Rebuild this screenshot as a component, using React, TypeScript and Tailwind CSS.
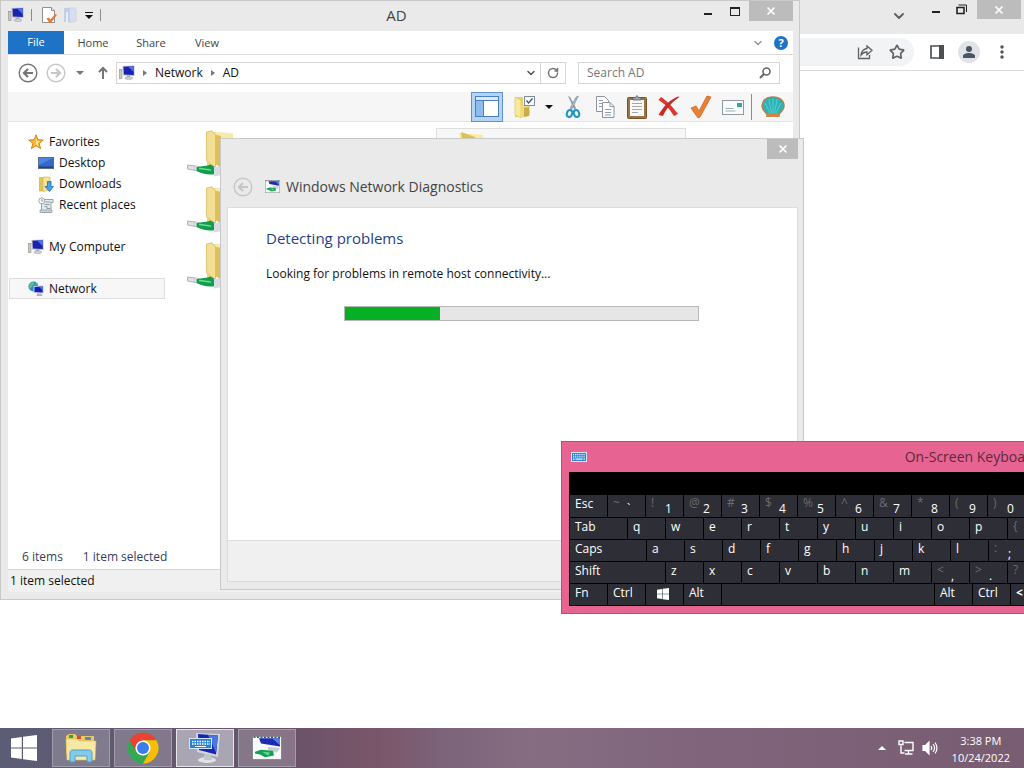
import type { ReactNode } from "react";
import { ChevronDown, RotateCw, Star } from "lucide-react";
import clsx from "clsx";

function MonitorIcon({ className = "h-4 w-4" }: { className?: string }) {
  return (
    <svg viewBox="0 0 16 16" className={className} aria-hidden="true">
      <rect x="0.5" y="4.5" width="2.5" height="9" fill="#c9c9c1" stroke="#8d8d86" strokeWidth="0.6" />
      <path d="M3.500 1 15.500.5v10.500L4 10.500z" fill="#b9bdc6" />
      <path d="M4.500 1.800 14.800 1.300v8.700L5 9.500z" fill="#1a22b0" />
      <path d="M9 1.600 14.800 1.300v6z" fill="#4f74e4" />
      <path d="M8 10.500h3l.5 2h-4z" fill="#a9acb3" />
      <ellipse cx="9.8" cy="13.200" rx="4" ry="1.4" fill="#cfd1d6" stroke="#9b9ea6" strokeWidth="0.5" />
    </svg>
  );
}

function PropertiesIcon() {
  return (
    <svg viewBox="0 0 16 16" className="h-4 w-4" aria-hidden="true">
      <path d="M1.5.5h9l3 3v12h-12z" fill="#fff" stroke="#8f8f8f" />
      <path d="M10.5.5v3h3" fill="#eee" stroke="#8f8f8f" />
      <path d="m5.500 11.500 2.500-1 1.500 2L14 7l2 .8L10 15.800 8.500 16z" fill="#e07c35" />
    </svg>
  );
}

function FadedFolderIcon() {
  return (
    <svg viewBox="0 0 16 16" className="h-4 w-4" aria-hidden="true">
      <path d="M2 1h6v14H2z" fill="#c3cfe3" />
      <path d="M7 1h5.500l1.500 1V14L8 15.500z" fill="#d5dff0" stroke="#bccae2" strokeWidth="0.6" />
      <path d="M4 5v10h2V5z" fill="#e6edf7" />
    </svg>
  );
}

function StarIcon() {
  return (
    <svg viewBox="0 0 16 16" className="h-4 w-4" aria-hidden="true">
      <path d="m8 .8 2 4.900 5.300.3-4.100 3.400 1.400 5.200L8 11.700l-4.600 2.900 1.400-5.200L.7 6 6 5.700z" fill="#f7b733" stroke="#d07c1c" strokeWidth="0.9" />
      <path d="M8 3.500 9.200 7l3 .3-2.400 1.900.6 2.800L8 10.400z" fill="#fde49a" />
    </svg>
  );
}

function DesktopIcon() {
  return (
    <svg viewBox="0 0 16 16" className="h-4 w-4" aria-hidden="true">
      <rect x="0.500" y="2.500" width="15" height="11" fill="#3568c9" stroke="#5b6c8f" />
      <path d="M1 3h14L1 10z" fill="#4d86e0" />
      <rect x="1" y="11.500" width="14" height="1.500" fill="#26406f" />
    </svg>
  );
}

function DownloadsIcon() {
  return (
    <svg viewBox="0 0 16 16" className="h-4 w-4" aria-hidden="true">
      <path d="M1.500 1.500h5V15h-5z" fill="#e3c35d" stroke="#c9a544" strokeWidth="0.6" />
      <path d="M5 1h7v13l-7 1.500z" fill="#f7e394" stroke="#d3b557" strokeWidth="0.6" />
      <path d="M9.500 5.500h3.500v5h2.500L11.500 15.500 7 10.500h2.500z" fill="#4aa3e6" stroke="#1f68b4" strokeWidth="0.8" />
    </svg>
  );
}

function RecentIcon() {
  return (
    <svg viewBox="0 0 16 16" className="h-4 w-4" aria-hidden="true">
      <path d="M3.500 2.500h11.500v3h-2v10H3.500z" fill="#e3e9ec" stroke="#8d99a2" strokeWidth="0.9" />
      <path d="M2 13h12v2.500H2z" fill="#ccd5da" stroke="#8d99a2" strokeWidth="0.7" />
      <circle cx="3.800" cy="3.800" r="3" fill="#f6f8f9" stroke="#8a949c" strokeWidth="0.8" />
      <path d="M3.800 2v2h1.500M7.500 5h5M6.500 7.500h5M6.500 9.500h2.500v2h3" stroke="#7b868f" strokeWidth="0.8" fill="none" />
    </svg>
  );
}

function NetworkIcon() {
  return (
    <svg viewBox="0 0 16 16" className="h-4 w-4" aria-hidden="true">
      <circle cx="5.500" cy="5.500" r="5" fill="#2f8fc0" />
      <path d="M2 2.500 5 1l1.500 2-2 1.500-2 3L1 6zM7 1l3 2-1 2z" fill="#5fc08a" />
      <path d="M5.500 5 15.500 4.500v8L5.500 12z" fill="#c6cad4" />
      <path d="M6.500 6 14.700 5.500v6L6.500 11z" fill="#1420bd" />
      <path d="M11 5.800 14.700 5.500v4z" fill="#4c78ea" />
      <path d="M9 12.500h4l1.500 2.500h-6z" fill="#aeb4be" />
    </svg>
  );
}

// Shared network folder, with the green cable plug under it
function SharedFolder() {
  return (
    <svg viewBox="0 0 48 48" className="h-12 w-12" aria-hidden="true">
      <path d="M20 2 44 3v30l-24 3z" fill="#efd77c" />
      <path d="M26 3 46 3v32H27z" fill="#f7eba8" />
      <path d="M26 4 34 6v32l-8-6z" fill="#dfbf58" />
      <path d="M19.500 2 25 .8 28.500 4.500v33L19.500 31z" fill="#f3de96" stroke="#d9bb62" strokeWidth="0.800" />
      <path d="m.5 35 8 1v4.500l-8-1.500z" fill="#dfe2e4" stroke="#9fa5a8" strokeWidth="0.8" />
      <path d="m8 36 4 .5v4.500l-4-1z" fill="#fff" stroke="#aaa" strokeWidth="0.6" />
      <path d="M9.500 37c6-1 10-1 14-2.500l6 3.500-1 6c-7 1.500-13 0-19-3z" fill="#129c4c" />
      <path d="m12 38.500 12 1.500" stroke="#6bdc97" strokeWidth="1.500" />
      <path d="m27 37 12-2v9l-12 2.500z" fill="#d8dce4" />
    </svg>
  );
}

function DiagnosticsIcon({ className = "h-4 w-4" }: { className?: string }) {
  return (
    <svg viewBox="0 0 30 26" className={className} preserveAspectRatio="none" aria-hidden="true">
      <rect x="0.500" y="0.500" width="29" height="25" fill="#f8fafa" stroke="#85898f" />
      <path d="M7 2.500h21v9L9 8z" fill="#1c2bb1" />
      <path d="m20 2.500 8 .5v7z" fill="#4f82dc" />
      <path d="m16 12 12 1-3 5-9-3z" fill="#c8ccd4" />
      <path d="m3 17 6-2 12 1 1 5-9 2-5-3-5-1z" fill="#15a153" />
      <path d="m10 17 8 1-2 3z" fill="#66d79a" />
      <path d="M1.500 1.500h27" stroke="#222a50" strokeDasharray="2 1.500" />
    </svg>
  );
}

function KeyboardGlyph({ className = "h-[10px] w-4" }: { className?: string }) {
  return (
    <svg viewBox="0 0 16 10" className={className} aria-hidden="true">
      <rect x="0.500" y="0.500" width="15" height="9" fill="#2f86cf" stroke="#d2e8f8" />
      <path d="M2 2.700h12M2 4.900h12" stroke="#e9f5fd" strokeWidth="1.200" strokeDasharray="1.200 .9" />
      <path d="M2 7.200h1.500M4.500 7.200h7M12.500 7.200H14" stroke="#e9f5fd" strokeWidth="1.200" />
    </svg>
  );
}

function WindowsLogo({ className }: { className?: string }) {
  return (
    <svg viewBox="0 0 26 26" className={className} fill="#fff" aria-hidden="true">
      <path d="M0 3.600 10.800 2v10.400H0zM12 1.800 26 0v12.400H12zM0 13.600h10.800V24L0 22.400zM12 13.600h14V26l-14-1.800z" />
    </svg>
  );
}

function CloseGlyph() {
  return (
    <svg viewBox="0 0 10 10" className="h-[10px] w-[10px]" aria-hidden="true">
      <path d="m1.500 1.500 7 7m0-7-7 7" stroke="#fff" strokeWidth="1.700" />
    </svg>
  );
}

function BackCircle({ flip, faint, className = "h-5 w-5" }: { flip?: boolean; faint?: boolean; className?: string }) {
  return (
    <svg
      viewBox="0 0 20 20"
      className={clsx(className, flip && "-scale-x-100", faint ? "text-[#c6c6c6]" : "text-[#757575]")}
      fill="none"
      stroke="currentColor"
      aria-hidden="true"
    >
      <circle cx="10" cy="10" r="8.800" strokeWidth="1.400" />
      <path d="M15 10H6m4-4-4 4 4 4" strokeWidth="2.200" />
    </svg>
  );
}

function Separator({ className = "h-3" }: { className?: string }) {
  return <span className={clsx("w-px bg-[#8c8c8c]", className)} />;
}

function Caret({ color = "#111" }: { color?: string }) {
  return (
    <svg viewBox="0 0 8 4" className="h-1 w-2" aria-hidden="true">
      <path d="M0 0h8L4 4z" fill={color} />
    </svg>
  );
}

function Browser() {
  return (
    <section aria-label="Browser" className="flex h-full flex-col bg-white text-[#5f6368]">
      <div className="flex h-[34px] items-start justify-end bg-[#e9e9e9] pr-[3px]">
        <button aria-label="Search tabs" className="mt-2 mr-[25px]">
          <ChevronDown size={16} strokeWidth={3} />
        </button>
        <button aria-label="Minimize" className="mt-[11px] mr-4 h-[2px] w-2 bg-[#222]" />
        <button aria-label="Restore" className="mt-1 mr-[10px]">
          <svg viewBox="0 0 11 11" className="h-[11px] w-[11px]" fill="none" stroke="#222" aria-hidden="true">
            <path d="M1 3.500h7v6H1z" strokeWidth="1.600" />
            <path d="M2.500 1h8v7" />
          </svg>
        </button>
        <button aria-label="Close" className="flex h-[19px] w-11 items-center justify-center bg-[#bcbcbc]">
          <CloseGlyph />
        </button>
      </div>
      <div className="flex h-[37px] items-center border-b border-[#dadada] pr-[14px]">
        <div className="flex h-7 flex-1 items-center justify-end gap-4 rounded-r-full bg-[#f1f3f4] pr-[9px]">
          <button aria-label="Share">
            <svg viewBox="0 0 16 16" className="h-4 w-4" fill="none" stroke="#5f6368" strokeWidth="1.300" aria-hidden="true">
              <path d="M1.500 3.500v11h11V11" />
              <path d="M10 2v2.500C6.500 5 4.500 7 4 11c1.500-2 3.300-3 6-3v2.700l5-4.400z" />
            </svg>
          </button>
          <button aria-label="Bookmark">
            <Star size={16} strokeWidth={2.5} />
          </button>
        </div>
        <button aria-label="Side panel" className="ml-4">
          <svg viewBox="0 0 14 14" className="h-[14px] w-[14px]" aria-hidden="true">
            <path d="M1 1h12v12H1z" fill="#fff" stroke="#4c5055" strokeWidth="1.700" />
            <path d="M9 0h5v14H9z" fill="#4c5055" />
          </svg>
        </button>
        <button aria-label="Profile" className="ml-[14px] flex h-[22px] w-[22px] items-center justify-center rounded-full bg-[#e0e4e9]">
          <svg viewBox="0 0 12 12" className="h-3 w-3" fill="#4c5660" aria-hidden="true">
            <circle cx="6" cy="3" r="3" />
            <path d="M0 12V10c0-2 3-3 6-3s6 1 6 3v2z" />
          </svg>
        </button>
        <button aria-label="Menu" className="ml-[14px]">
          <svg viewBox="0 0 16 16" className="h-4 w-4" fill="#50545a" aria-hidden="true">
            <circle cx="8" cy="3" r="1.700" />
            <circle cx="8" cy="8" r="1.700" />
            <circle cx="8" cy="13" r="1.700" />
          </svg>
        </button>
      </div>
    </section>
  );
}

const places: { label: string; icon: ReactNode; indent?: boolean; gap?: boolean; selected?: boolean }[] = [
  { label: "Favorites", icon: <StarIcon /> },
  { label: "Desktop", icon: <DesktopIcon />, indent: true },
  { label: "Downloads", icon: <DownloadsIcon />, indent: true },
  { label: "Recent places", icon: <RecentIcon />, indent: true },
  { label: "My Computer", icon: <MonitorIcon />, gap: true },
  { label: "Network", icon: <NetworkIcon />, gap: true, selected: true },
];

function CommandBar() {
  return (
    <div className="mt-px flex h-[30px] items-center justify-end border-b border-[#e4e4e4] bg-[#f6f6f7] pr-2">
      <button aria-label="Navigation pane" className="flex h-[30px] w-8 items-center justify-center border border-[#5b92d2] bg-[#b5d3f3]">
        <svg viewBox="0 0 24 22" className="h-[22px] w-6" aria-hidden="true">
          <rect x="0.500" y="0.500" width="23" height="20" fill="#fff" stroke="#4b7fbd" />
          <path d="M1 1h22v3H1z" fill="#dbe8f7" />
          <path d="M1 5h7v15H1z" fill="#8dbcf0" />
          <path d="M8.500 5v15M1 4.500h22" stroke="#4b7fbd" />
        </svg>
      </button>
      <button aria-label="Folder options" className="ml-[10px]">
        <svg viewBox="0 0 24 24" className="h-6 w-6" aria-hidden="true">
          <path d="M2 2h8v20H2z" fill="#e8cf67" />
          <path d="m2 2 6 3v18l-6-3z" fill="#f8e998" stroke="#dcc15d" strokeWidth="0.6" />
          <path d="M8 10h9v10l-9 3z" fill="#eddb7d" />
          <path d="m11 13 5-1v9l-5 1z" fill="#c9ac47" />
          <rect x="11.500" y="1.500" width="10" height="9" fill="#fff" stroke="#7b8ca3" />
          <path d="m13.500 5.500 2 2.500 4-4.500" stroke="#31557f" strokeWidth="1.300" fill="none" />
        </svg>
      </button>
      <button aria-label="Folder options menu" className="ml-2">
        <Caret />
      </button>
      <button aria-label="Cut" className="ml-2">
        <svg viewBox="0 0 24 24" className="h-6 w-6" fill="none" aria-hidden="true">
          <path d="m7 1 6.500 14L15 13 9 2z" fill="#8b98a5" />
          <path d="m17.500 1-7 14L9 13l6-11z" fill="#a9b5c0" stroke="#76838f" strokeWidth="0.500" />
          <ellipse cx="8.500" cy="18.500" rx="2.600" ry="3.500" transform="rotate(20 8.500 18.500)" stroke="#2195c4" strokeWidth="2" />
          <ellipse cx="15.500" cy="18.500" rx="2.600" ry="3.500" transform="rotate(-20 15.500 18.500)" stroke="#2195c4" strokeWidth="2" />
        </svg>
      </button>
      <button aria-label="Copy" className="ml-2">
        <svg viewBox="0 0 24 24" className="h-6 w-6" fill="#fdfdfd" stroke="#8e9499" aria-hidden="true">
          <path d="M3.500 1.500h8l4 4v11h-12z" />
          <path d="M9.500 7.500h7.500l4 4v11H9.500z" />
          <path d="M17 7.500v4h4M6 5.500h4M6 8.500h3M6 11.500h3M12 14.500h6M12 17.500h6M12 20h6" stroke="#8b9cad" fill="none" />
        </svg>
      </button>
      <button aria-label="Paste" className="ml-2">
        <svg viewBox="0 0 24 24" className="h-6 w-6" aria-hidden="true">
          <rect x="2.500" y="2.500" width="19" height="21" rx="1" fill="#9d7442" stroke="#74532c" />
          <path d="M5 5h14v16H5z" fill="#f9f9f7" />
          <path d="M8 5V2.500h2.500L12 .5l1.500 2H16V5z" fill="#a2a6a9" stroke="#555" strokeWidth="0.700" />
          <path d="M7 8.500h10M7 11.500h10M7 14.500h10M7 17.500h6" stroke="#a4a8ad" />
        </svg>
      </button>
      <button aria-label="Delete" className="ml-2">
        <svg viewBox="0 0 24 24" className="h-6 w-6" aria-hidden="true">
          <path d="M4 2c6 4 11 9 17 17l-4 2C12 13 7 8 1.500 5z" fill="#dd3530" />
          <path d="M22.500 2C16 6 9.500 13 6 21l-4.500-1C6.500 11 14 4 21 1.500z" fill="#c62a26" />
        </svg>
      </button>
      <button aria-label="Rename" className="ml-2">
        <svg viewBox="0 0 24 24" className="h-6 w-6" aria-hidden="true">
          <path d="m2 13 5-2 3 5L18 1l4 1-11 20-2 1z" fill="#ec7f31" stroke="#c96922" strokeWidth="0.800" />
        </svg>
      </button>
      <button aria-label="Email" className="ml-2">
        <svg viewBox="0 0 24 24" className="h-6 w-6" aria-hidden="true">
          <rect x="1.500" y="5.500" width="21" height="14" fill="#fafbfb" stroke="#8f999e" />
          <path d="M16 8h5v4h-5z" fill="#35a3a8" />
          <path d="M4.500 13.500h8M4.500 16h10" stroke="#9ab1ba" />
        </svg>
      </button>
      <Separator className="ml-[6px] h-[26px]" />
      <button aria-label="Shell" className="ml-[9px]">
        <svg viewBox="0 0 24 24" className="h-6 w-6" aria-hidden="true">
          <path d="M1 11C1 6 5 2 12 2s11 4 11 9c0 3-2 5-4 7l-2 3H7l-2-3c-2-2-4-4-4-7z" fill="#2cb3b6" stroke="#b08050" strokeWidth="1.500" />
          <path d="M12 4v14M8 4.500 10.500 18M16 4.500 13.500 18M4 8l5 10M20 8l-5 10" stroke="#5fd0d0" strokeWidth="0.900" />
          <path d="M6 18h12l1 4h-4l-3-1-3 1H5z" fill="#d08545" />
        </svg>
      </button>
    </div>
  );
}

function Explorer() {
  return (
    <section
      aria-label="AD"
      className="absolute top-0 left-0 flex h-[600px] w-[800px] flex-col border border-[#c9c9c9] bg-[#eaeaea] pr-[6px] pb-[7px] pl-[7px] text-xs"
    >
      <header className="flex h-[30px] items-start">
        <div className="flex flex-1 items-center gap-[7px] pt-[6px]">
          <MonitorIcon />
          <Separator />
          <button aria-label="Properties" className="ml-[2px]">
            <PropertiesIcon />
          </button>
          <div className="-ml-[2px]">
            <FadedFolderIcon />
          </div>
          <button aria-label="Customize toolbar" className="flex w-2 flex-col items-center gap-[2px]">
            <span className="h-px w-2 bg-[#111]" />
            <Caret />
          </button>
          <Separator />
        </div>
        <h1 className="mr-2 pt-1 text-[15px] leading-5 text-[#444]">AD</h1>
        <div className="flex flex-1 items-start justify-end">
          <button aria-label="Minimize" className="mt-3 mr-[18px] h-[2px] w-2 bg-[#222]" />
          <button aria-label="Maximize" className="mt-[6px] mr-[9px] h-[9px] w-[10px] border border-t-2 border-[#222]" />
          <button aria-label="Close" className="flex h-5 w-11 items-center justify-center bg-[#bcbcbc]">
            <CloseGlyph />
          </button>
        </div>
      </header>

      <div className="flex min-h-0 flex-1 flex-col bg-white">
        <nav className="flex h-6 items-center border-b border-[#dcdcdc] pr-[5px] text-[11px] text-[#444]">
          <button className="h-full w-14 bg-[#1e73c6] text-white">File</button>
          <button className="w-[58px] pt-[2px]">Home</button>
          <button className="w-[58px] pt-[2px]">Share</button>
          <button className="w-[54px] pt-[2px]">View</button>
          <button aria-label="Expand ribbon" className="ml-auto text-[#999]">
            <ChevronDown size={12} strokeWidth={3} />
          </button>
          <button aria-label="Help" className="ml-[10px] h-[14px] w-[14px] rounded-full bg-[#1e73c6] text-[11px] leading-[14px] font-bold text-white">
            ?
          </button>
        </nav>

        <div className="flex h-9 items-center pr-[13px] pl-[10px]">
          <button aria-label="Back">
            <BackCircle />
          </button>
          <button aria-label="Forward" disabled className="ml-2">
            <BackCircle flip faint />
          </button>
          <button aria-label="Recent locations" className="ml-[10px]">
            <Caret color="#777" />
          </button>
          <button aria-label="Up" className="ml-[13px]">
            <svg viewBox="0 0 12 14" className="h-[14px] w-3" fill="none" stroke="#757575" strokeWidth="2" aria-hidden="true">
              <path d="M6 13V2M2 6l4-4 4 4" />
            </svg>
          </button>
          <div className="ml-[7px] flex h-[22px] flex-1 items-center border border-[#d6d6d6] pl-[2px]">
            <MonitorIcon />
            <svg viewBox="0 0 4 6" className="ml-2 h-[6px] w-1" fill="#777" aria-hidden="true">
              <path d="M0 0v6l4-3z" />
            </svg>
            <a href="#network" className="ml-2">Network</a>
            <svg viewBox="0 0 4 6" className="ml-2 h-[6px] w-1" fill="#777" aria-hidden="true">
              <path d="M0 0v6l4-3z" />
            </svg>
            <a href="#ad" className="ml-2">AD</a>
            <button aria-label="Previous locations" className="mr-[3px] ml-auto text-[#555]">
              <ChevronDown size={12} strokeWidth={3} />
            </button>
            <button aria-label="Refresh" className="flex h-full w-[25px] items-center justify-center border-l border-[#d6d6d6] text-[#757575]">
              <RotateCw size={12} strokeWidth={3} />
            </button>
          </div>
          <div className="ml-3 flex h-[22px] w-[202px] items-center border border-[#d6d6d6] pr-2 pl-2">
            <input aria-label="Search AD" placeholder="Search AD" className="w-full min-w-0 outline-none placeholder:text-[#777]" />
            <svg viewBox="0 0 12 12" className="h-3 w-3 shrink-0" fill="none" stroke="#666" aria-hidden="true">
              <circle cx="7.500" cy="4.500" r="3.500" strokeWidth="1.600" />
              <path d="M5 7 1 11" strokeWidth="2.200" />
            </svg>
          </div>
        </div>

        <CommandBar />

        <div className="flex min-h-0 flex-1">
          <ul className="w-[157px] pt-[9px]">
            {places.map((place) => (
              <li
                key={place.label}
                className={clsx(
                  "flex h-[21px] items-center gap-[5px] border",
                  place.gap && "mt-[21px]",
                  place.indent ? "pl-[29px]" : place.selected ? "pl-[18px]" : "pl-[19px]",
                  place.selected ? "ml-px border-[#dedede] bg-[#f7f7f7]" : "border-transparent"
                )}
              >
                {place.icon}
                {place.label}
              </li>
            ))}
          </ul>
          <div className="flex flex-1 gap-[201px] pt-[6px] pl-[22px]">
            <div className="flex flex-col gap-2 pt-[2px]">
              <SharedFolder />
              <SharedFolder />
              <SharedFolder />
            </div>
            <div className="h-[54px] w-[250px] border border-[#dedede] bg-[#f7f7f7] pl-1">
              <svg viewBox="0 0 48 48" className="h-12 w-12" aria-hidden="true">
                <path d="m18 4 24 2v30l-18 4z" fill="#f8ec9c" />
                <path d="m20 3 14 5v30l-8 2z" fill="#d9c252" />
              </svg>
            </div>
          </div>
        </div>

        <div className="flex h-6 items-center gap-5 px-[14px] text-[#36405c]">
          <span>6 items</span>
          <span>1 item selected</span>
        </div>
        <footer className="flex h-[23px] items-center border-t border-[#d5d5d5] bg-[#f0f0f0] px-[2px]">1 item selected</footer>
      </div>
    </section>
  );
}

function Diagnostics() {
  const progress = 27;

  return (
    <section
      aria-label="Windows Network Diagnostics"
      className="absolute top-[138px] left-[220px] flex h-[452px] w-[584px] flex-col border border-[#c9c9c9] bg-[#eaeaea] pr-[5px] pb-[7px] pl-[6px]"
    >
      <div className="flex h-5 shrink-0 justify-end">
        <button aria-label="Close" className="flex w-[31px] items-center justify-center bg-[#bcbcbc]">
          <CloseGlyph />
        </button>
      </div>
      <header className="flex h-12 shrink-0 items-center gap-3 pt-[7px] pl-[6px]">
        <button aria-label="Back" disabled>
          <BackCircle faint />
        </button>
        <div className="flex items-center gap-[6px]">
          <DiagnosticsIcon className="h-[13px] w-[15px]" />
          <h2 className="text-sm text-[#444]">Windows Network Diagnostics</h2>
        </div>
      </header>
      <div className="flex flex-1 flex-col border border-[#dcdcdc] bg-white px-[38px] pt-5 text-xs">
        <h3 className="text-[15px] leading-5 text-[#1f3f87]">Detecting problems</h3>
        <p className="mt-[18px] leading-4">Looking for problems in remote host connectivity...</p>
        <div
          role="progressbar"
          aria-label="Detecting problems"
          aria-valuenow={progress}
          className="mt-6 mr-[60px] ml-[78px] h-[15px] border border-[#b9b9b9] bg-[#e6e6e6]"
        >
          <div className="h-full bg-[#06b025]" style={{ width: `${progress}%` }} />
        </div>
      </div>
      <div className="h-[41px] shrink-0 border border-t-0 border-[#dcdcdc] bg-[#f0f0f0]" />
    </section>
  );
}

type KeyDef = { label: ReactNode; shift?: string; name?: string; width?: string };

const keyRows: KeyDef[][] = [
  [
    { label: "Esc" },
    { label: "`", shift: "~" },
    { label: "1", shift: "!" },
    { label: "2", shift: "@" },
    { label: "3", shift: "#" },
    { label: "4", shift: "$" },
    { label: "5", shift: "%" },
    { label: "6", shift: "^" },
    { label: "7", shift: "&" },
    { label: "8", shift: "*" },
    { label: "9", shift: "(" },
    { label: "0", shift: ")" },
  ],
  [
    { label: "Tab", width: "w-[57px]" },
    ..."qwertyuiop".split("").map((label) => ({ label })),
    { label: "[", shift: "{" },
  ],
  [
    { label: "Caps", width: "w-[76px]" },
    ..."asdfghjkl".split("").map((label) => ({ label })),
    { label: ";", shift: ":" },
  ],
  [
    { label: "Shift", width: "w-[95px]" },
    ..."zxcvbnm".split("").map((label) => ({ label })),
    { label: ",", shift: "<" },
    { label: ".", shift: ">" },
    { label: "/", shift: "?" },
  ],
  [
    { label: "Fn" },
    { label: "Ctrl" },
    { label: <WindowsLogo className="mt-1 ml-[5px] h-3 w-[14px]" />, name: "Windows" },
    { label: "Alt" },
    { label: "", name: "Space", width: "w-[212px]" },
    { label: "Alt" },
    { label: "Ctrl" },
    { label: <b>&lt;</b>, name: "Left" },
  ],
];

function Key({ label, shift, name, width = "w-[37px]" }: KeyDef) {
  return (
    <button aria-label={name} className={clsx("flex h-full shrink-0 bg-[#2e2e36] pl-[5px] text-left", width)}>
      {shift && <span className="w-[14px] text-[#6b6b70] leading-4">{shift}</span>}
      <span className={shift ? "pt-[5px] leading-[18px]" : "leading-[18px]"}>{label}</span>
    </button>
  );
}

function OnScreenKeyboard() {
  return (
    <section
      aria-label="On-Screen Keyboard"
      className="absolute top-[441px] left-[561px] flex w-[820px] flex-col border border-[#b5507a] bg-[#e76492] px-[7px] pb-[7px]"
    >
      <header className="flex h-[30px] items-center">
        <div className="flex-1 pl-[2px]">
          <KeyboardGlyph />
        </div>
        <h2 className="text-sm text-[#5b2a3d]">On-Screen Keyboard</h2>
        <div className="flex-1" />
      </header>
      <div className="flex flex-col gap-px bg-black pt-[23px] pb-px text-xs text-white">
        {keyRows.map((row, i) => (
          <div key={i} className={clsx("flex gap-px pl-px", i === 0 ? "h-[22px]" : "h-[21px]")}>
            {row.map((key, j) => (
              <Key key={j} {...key} />
            ))}
          </div>
        ))}
      </div>
    </section>
  );
}

function TaskButton({ label, active, children }: { label: string; active?: boolean; children: ReactNode }) {
  return (
    <button
      aria-label={label}
      className={clsx(
        "flex h-[38px] w-[58px] items-center justify-center border",
        active ? "border-[#e9e6ec] bg-[#a9a5b3]" : "border-[#9f9dac] bg-white/20"
      )}
    >
      {children}
    </button>
  );
}

function Taskbar() {
  return (
    <footer className="flex h-10 shrink-0 items-center bg-[linear-gradient(90deg,#5b5d75_0%,#6a5369_29%,#7b566a_37%,#7b6379_43%,#866d82_52%,#7f647b_70%,#775c72_100%)] text-white">
      <button aria-label="Start" className="flex w-[52px] pl-[11px]">
        <WindowsLogo className="h-[26px] w-[26px]" />
      </button>
      <div className="flex gap-1">
        <TaskButton label="File Explorer">
          <svg viewBox="0 0 32 30" className="h-[30px] w-8" aria-hidden="true">
            <path d="M1 3 4 1h6l2 2h17v18H1z" fill="#e6cb66" />
            <path d="M4 2h4v3H4z" fill="#3a9c48" />
            <path d="M12 3h4v3h-4z" fill="#ce4c35" />
            <path d="M20 4h6v3h-6z" fill="#5f83bd" />
            <path d="M1 6h11l2 2h17l-1 19H2z" fill="#f7e8a2" stroke="#d9bf62" strokeWidth="0.600" />
            <path d="M5 29v-9c0-2 1-3 3-3h16c2 0 3 1 3 3v9h-5v-6H10v6z" fill="#83cbe8" stroke="#4a9fc8" />
          </svg>
        </TaskButton>
        <TaskButton label="Chrome">
          <svg viewBox="0 0 32 32" className="h-8 w-8" aria-hidden="true">
            <circle cx="16" cy="16" r="15.500" fill="#34a853" />
            <path d="M2.600 8.200A15.500 15.500 0 0 1 29.400 8.200H16l-6.700 11.600z" fill="#ea4335" />
            <path d="M29.400 8.200A15.500 15.500 0 0 1 16 31.500l6.700-11.600L16 8.200z" fill="#fbbc05" />
            <circle cx="16" cy="16" r="7.600" fill="#fff" />
            <circle cx="16" cy="16" r="6" fill="#3b7de9" />
          </svg>
        </TaskButton>
        <TaskButton label="On-Screen Keyboard" active>
          <svg viewBox="0 0 32 32" className="h-8 w-8" aria-hidden="true">
            <path d="m7 1 24 1-2 23L8 20z" fill="#d3d6dc" />
            <path d="m9 2 20 1.500-2 19L10 18z" fill="#1725b3" />
            <path d="m19 3 10 .5-2 17z" fill="#4d77df" />
            <ellipse cx="18" cy="28" rx="9" ry="3" fill="#dfe2e6" />
            <path d="m15 22 7 1 1 5h-8z" fill="#c1c5cc" />
            <rect x="0.500" y="6.500" width="22" height="10" fill="#2c82cf" stroke="#d2e8f8" />
            <path d="M3 9.500h18M3 12h18" stroke="#fff" strokeWidth="1.300" strokeDasharray="1.500 1" />
            <path d="M6 14.500h11" stroke="#fff" />
          </svg>
        </TaskButton>
        <TaskButton label="Windows Network Diagnostics">
          <DiagnosticsIcon className="h-6 w-[30px]" />
        </TaskButton>
      </div>
      <div className="ml-auto flex items-center pr-[14px]">
        <button aria-label="Show hidden icons">
          <svg viewBox="0 0 8 4" className="h-1 w-2" fill="#fff" aria-hidden="true">
            <path d="M4 0 8 4H0z" />
          </svg>
        </button>
        <svg viewBox="0 0 16 16" className="ml-3 h-4 w-4" fill="none" stroke="#fff" strokeWidth="1.400" aria-hidden="true">
          <path d="M6.500 2.500H15v8H6.500M10.500 10.500v3M7 14h7.500M3 5.500V13h3.500" />
          <path d="M1 1h4v3.500H1z" />
        </svg>
        <svg viewBox="0 0 16 16" className="ml-2 h-4 w-4" fill="none" stroke="#fff" strokeWidth="1.200" aria-hidden="true">
          <path d="M1 5.500h2.500L7 2v12l-3.500-3.500H1z" fill="#fff" />
          <path d="M9 6c1 1.300 1 2.700 0 4M11 4c2 2.500 2 5.500 0 8M13 2.500c2.500 3.500 2.500 7.500 0 11" />
        </svg>
        <div className="ml-[14px] pt-[2px] text-center text-[11px] leading-[17px]">
          <p>3:38 PM</p>
          <p>10/24/2022</p>
        </div>
      </div>
    </footer>
  );
}

export default function App() {
  return (
    <div className="flex h-screen flex-col overflow-hidden bg-white font-['Open_Sans',sans-serif] text-[#111]">
      <main className="relative min-h-0 flex-1 overflow-hidden">
        <Browser />
        <Explorer />
        <Diagnostics />
        <OnScreenKeyboard />
      </main>
      <Taskbar />
    </div>
  );
}
